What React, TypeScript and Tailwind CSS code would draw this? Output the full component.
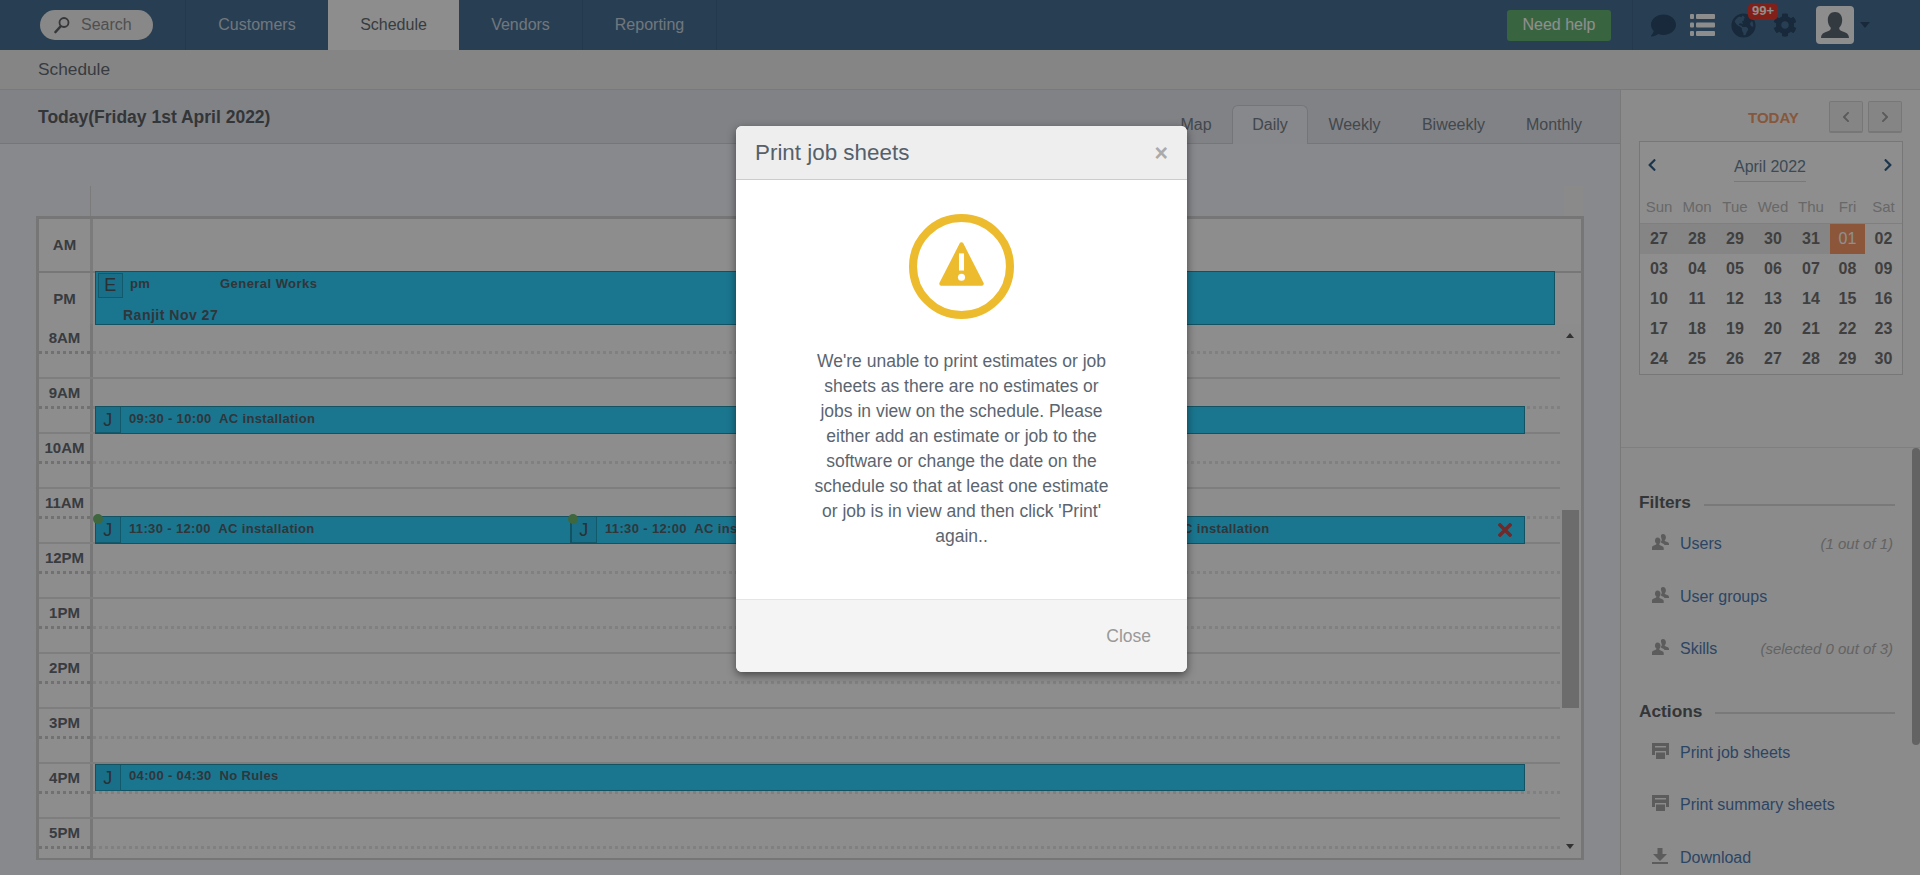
import React from 'react';
import { FaComment, FaGlobeAmericas, FaCog, FaChevronLeft, FaChevronRight } from 'react-icons/fa';

const hours = ['8AM', '9AM', '10AM', '11AM', '12PM', '1PM', '2PM', '3PM', '4PM', '5PM'];
const weekDays = ['Sun', 'Mon', 'Tue', 'Wed', 'Thu', 'Fri', 'Sat'];
const calendarDays = [
  '27', '28', '29', '30', '31', '01', '02',
  '03', '04', '05', '06', '07', '08', '09',
  '10', '11', '12', '13', '14', '15', '16',
  '17', '18', '19', '20', '21', '22', '23',
  '24', '25', '26', '27', '28', '29', '30',
];

const UsersIcon = () => (
  <svg viewBox="0 0 17 16" className="h-4 w-[17px] fill-[#a4a4a4]">
    <path d="M11 0c1.800 0 2.900 1.300 2.900 3.200 0 1.300-.5 2.300-1.200 3 0 .8.300 1 1.300 1.400 1.400.5 3 1 3 2.400v1h-4.500c-.5-1-1.600-1.500-2.700-2-.8-.3-1-.5-1-1 .5-.6.900-1.200 1-2-.1-.7-.2-1.500-.5-2C8.300 1.300 9.300 0 11 0z" />
    <path d="M5.500 3.500c1.900 0 3 1.400 3 3.300 0 1.300-.5 2.400-1.200 3.100 0 .8.300 1.100 1.400 1.500 1.500.5 3 1 3 2.500V16H0v-2.600c0-1.500 1.500-2 3-2.500 1.100-.4 1.400-.7 1.400-1.500C3.700 9.200 3 8.100 3 6.800c0-1.900.7-3.300 2.500-3.300z" />
  </svg>
);

const PrintIcon = () => (
  <svg viewBox="0 0 17 16" className="h-4 w-[17px] fill-[#a4a4a4]">
    <path d="M0 0h17v12h-3V8H3v4H0z" />
    <path d="M4 9.500h9V16H4z" />
    <rect x="3" y="3" width="11" height="1.500" className="fill-[#f8f8f8]" />
  </svg>
);

const DownloadIcon = () => (
  <svg viewBox="0 0 16 16" className="h-4 w-4 fill-[#a4a4a4]">
    <path d="M5.500 0h5v6H15l-7 7-7-7h4.500z" />
    <rect x="0" y="14" width="16" height="2" />
  </svg>
);

const ListIcon = () => (
  <svg viewBox="0 0 25 22" className="h-[22px] w-[25px] fill-[#fbfbfb]">
    <rect x="0" y="0" width="4" height="5" rx="1" />
    <rect x="6" y="0" width="19" height="5" rx="1" />
    <rect x="0" y="8.500" width="4" height="5" rx="1" />
    <rect x="6" y="8.500" width="19" height="5" rx="1" />
    <rect x="0" y="17" width="4" height="5" rx="1" />
    <rect x="6" y="17" width="19" height="5" rx="1" />
  </svg>
);

const SearchIcon = () => (
  <svg viewBox="0 0 16 18" className="h-[18px] w-4 fill-none stroke-[#5f6368]">
    <circle cx="10" cy="6.500" r="4.500" strokeWidth="1.800" />
    <path d="M6.500 10.500L1.500 16" strokeWidth="2.600" strokeLinecap="round" />
  </svg>
);

const AvatarIcon = () => (
  <svg viewBox="0 0 38 38" className="h-[38px] w-[38px] fill-[#5c6873]">
    <path d="M19 6c4.600 0 7.200 3.500 7.200 8 0 3.300-1.200 6-3 7.800 0 2 .7 2.700 3.600 3.700 3.600 1.300 5.900 2.200 6.200 6.500H5c.3-4.300 2.600-5.200 6.200-6.500 2.900-1 3.600-1.700 3.600-3.700-1.800-1.800-3-4.500-3-7.800 0-4.500 2.600-8 7.200-8z" />
  </svg>
);

const WarningIcon = () => (
  <svg viewBox="0 0 104 104" className="h-[105px] w-[105px]">
    <circle cx="52" cy="52" r="48" fill="none" stroke="#edbb2e" strokeWidth="8" />
    <polygon points="52,30 72,69 32,69" fill="#edbb2e" stroke="#edbb2e" strokeWidth="4" strokeLinejoin="round" />
    <rect x="49.500" y="39" width="5" height="17" fill="#fff" />
    <circle cx="52" cy="62.700" r="3.500" fill="#fff" />
  </svg>
);

const Dotted = ({ strong }: { strong?: boolean }) => (
  <div
    className={
      strong
        ? 'h-[3px] w-full bg-[repeating-linear-gradient(90deg,#cacaca_0_3px,transparent_3px_6px)]'
        : 'h-[3px] w-full bg-[repeating-linear-gradient(90deg,#e4e4e4_0_3px,transparent_3px_6px)]'
    }
  />
);

const HourRow = ({ label }: { label: string }) => (
  <div className="flex h-[55px] shrink-0 border-b-2 border-[#e0e0e0]">
    <div className="w-[51px] shrink-0">
      <div className="flex h-[27px] items-center justify-center pt-[1px] text-[15px] font-bold text-[#646b73]">{label}</div>
      <Dotted strong />
    </div>
    <div className="w-[3px] shrink-0 bg-[#d4d4d4]" />
    <div className="flex-1 pt-[27px]">
      <Dotted />
    </div>
  </div>
);

const JobBlock = ({ time, title, className }: { time: string; title: string; className: string }) => (
  <div className={`absolute flex border border-[#1f94b0] bg-[#2fd2ff] text-[13px] font-bold tracking-[0.35px] text-[#586068] ${className}`}>
    <div className="flex h-[26px] w-[25px] shrink-0 items-center justify-center border-r border-b border-[#20a0bf] bg-[#2cc6f0] text-[18px] font-normal text-[#4e565d]">J</div>
    <div className="whitespace-pre pl-[8px]">{time}  {title}</div>
  </div>
);

const SideRow = ({ icon, label, note }: { icon: React.ReactNode; label: string; note?: string }) => (
  <div className="flex h-[52.5px] shrink-0 items-center pl-[31px] pr-[27px]">
    <span className="-mt-[4px] w-[28px] shrink-0">{icon}</span>
    <span className="text-[#4f7cb4]">{label}</span>
    {note && <span className="ml-auto text-[15px] italic text-[#b0b0b0]">{note}</span>}
  </div>
);

const SideHeading = ({ label, className }: { label: string; className?: string }) => (
  <div className={`flex h-6 shrink-0 items-center gap-[13px] pl-[18px] pr-[25px] ${className || ''}`}>
    <span className="text-[17.3px] font-bold text-[#5c6166]">{label}</span>
    <span className="mt-[3px] h-[2px] flex-1 bg-[#d8d8d8]" />
  </div>
);

export default function App() {
  return (
    <div className="relative h-[875px] w-[1920px] overflow-hidden bg-[#f8f8f8] font-['Liberation_Sans',Arial,sans-serif] text-base text-[#606a72]">
      {/* Top nav */}
      <header className="flex h-[50px] items-center bg-[#487094] text-[#c9d5df]">
        <div className="flex h-full w-[186px] items-center border-r border-[#41668a] pl-[40px]">
          <div className="flex h-[30px] w-[113px] items-center gap-[11px] rounded-full bg-[#f2f2f2] pl-[14px] text-[#8e8e8e]">
            <SearchIcon />
            <span>Search</span>
          </div>
        </div>
        <nav className="flex h-full">
          <div className="flex w-[142px] items-center justify-center">Customers</div>
          <div className="flex w-[131px] items-center justify-center bg-[#fbfbfb] text-[#646b73]">Schedule</div>
          <div className="flex w-[124px] items-center justify-center border-r border-[#41668a]">Vendors</div>
          <div className="flex w-[134px] items-center justify-center border-r border-[#41668a]">Reporting</div>
        </nav>
        <div className="ml-auto flex h-full items-center">
          <button className="h-[31px] w-[104px] rounded-[3px] bg-[#66b373] text-white">Need help</button>
          <div className="ml-[21px] h-full w-px bg-[#41668a]" />
          <FaComment className="ml-[18px] h-[25px] w-[25px] text-[#2a4a6a]" />
          <div className="ml-[14px]"><ListIcon /></div>
          <div className="relative ml-[16px]">
            <FaGlobeAmericas className="h-[25px] w-[25px] text-[#2a4a6a]" />
            <span className="absolute -top-[10px] left-[17px] flex h-[17px] w-[30px] items-center justify-center rounded-[5px] bg-[#e6392b] text-[13px] font-bold text-white">99+</span>
          </div>
          <FaCog className="ml-[17px] h-[24px] w-[24px] text-[#2a4a6a]" />
          <div className="ml-[19px] h-[38px] w-[38px] rounded-[4px] bg-[#fbfbfb]"><AvatarIcon /></div>
          <span className="ml-[6px] mr-[50px] h-0 w-0 border-x-[5px] border-t-[6px] border-x-transparent border-t-[#2a4a6a]" />
        </div>
      </header>

      {/* Breadcrumb */}
      <div className="flex h-[40px] items-center border-b border-[#d8d8d8] bg-[#eeeeee] pl-[38px] text-[17.3px] text-[#646b73]">Schedule</div>

      <div className="flex h-[785px]">
        {/* Schedule */}
        <main className="w-[1620px] shrink-0 bg-[#f3f5fc]">
          <div className="flex h-[54px] items-end justify-between border-b border-[#d0d2d8] bg-[#e6e8ef]">
            <h1 className="self-center pl-[38px] pt-[2px] text-[17.5px] font-bold text-[#5c6166]">Today(Friday 1st April 2022)</h1>
            <div className="-mb-px flex h-[39px] pr-[18px] text-[#768089]">
              <div className="flex w-[72px] items-center justify-center">Map</div>
              <div className="flex w-[76px] items-center justify-center rounded-t-[6px] border border-b-0 border-[#cfd1d8] bg-[#f0f2f8]">Daily</div>
              <div className="flex w-[93px] items-center justify-center">Weekly</div>
              <div className="flex w-[105px] items-center justify-center">Biweekly</div>
              <div className="flex w-[96px] items-center justify-center">Monthly</div>
            </div>
          </div>

          <div className="ml-[36px] w-[1548px] pt-[42px]">
            <div className="flex h-[30px]">
              <div className="ml-[54px] w-px bg-[#dcdcdc]" />
              <div className="ml-auto mr-px w-[19px] bg-[#f6f6f6]" />
            </div>
            <div className="relative h-[644px] overflow-hidden border-[3px] border-b-2 border-[#d2d2d2] bg-[#fcfcfc]">
              {/* All-day rows */}
              <div className="flex h-[54px] border-b-[2px] border-[#d4d4d4]">
                <div className="flex w-[51px] items-center justify-center pt-[1px] text-[15px] font-bold text-[#646b73]">AM</div>
                <div className="w-[3px] bg-[#dcdcdc]" />
              </div>
              <div className="flex h-[51px]">
                <div className="flex w-[51px] items-center justify-center pt-[1px] text-[15px] font-bold text-[#646b73]">PM</div>
                <div className="w-[3px] bg-[#dcdcdc]" />
              </div>
              {hours.map((h) => (
                <HourRow key={h} label={h} />
              ))}

              {/* Estimate */}
              <div className="absolute left-[56px] top-[52px] h-[54px] w-[1460px] border border-[#1f94b0] bg-[#2fd2ff] text-[13px] font-bold tracking-[0.3px] text-[#586068]">
                <div className="absolute left-[2px] top-[1px] flex h-[25px] w-[25px] items-center justify-center border border-[#20a0bf] bg-[#2cc6f0] text-[18px] font-normal text-[#4e565d]">E</div>
                <span className="absolute left-[34px] top-[2px]">pm</span>
                <span className="absolute left-[124px] top-[2px] tracking-[0.45px]">General Works</span>
                <span className="absolute left-[27px] top-[33px] text-[14px] tracking-[0.5px]">Ranjit Nov 27</span>
              </div>

              <JobBlock time="09:30 - 10:00" title="AC installation" className="left-[56px] top-[187px] h-[28px] w-[1430px] leading-[24px]" />
              <JobBlock time="11:30 - 12:00" title="AC installation" className="left-[56px] top-[297px] h-[28px] w-[476px] leading-[24px]" />
              <JobBlock time="11:30 - 12:00" title="AC installation" className="left-[532px] top-[297px] h-[28px] w-[476px] leading-[24px]" />
              <JobBlock time="11:30 - 12:00" title="AC installation" className="left-[1011px] top-[297px] h-[28px] w-[475px] leading-[24px]" />
              <JobBlock time="04:00 - 04:30" title="No Rules" className="left-[56px] top-[545px] h-[27px] w-[1430px] leading-[22px]" />

              {/* Status dots and remove mark */}
              <span className="absolute left-[54px] top-[295px] h-[10px] w-[10px] rounded-full bg-[#6fb86f]" />
              <span className="absolute left-[529px] top-[295px] h-[10px] w-[10px] rounded-full bg-[#6fb86f]" />
              <svg viewBox="0 0 14 14" className="absolute left-[1459px] top-[304px] h-[14px] w-[14px] stroke-[#c94a4a]" strokeWidth="3.500" strokeLinecap="square">
                <path d="M2 2l10 10M12 2L2 12" />
              </svg>

              {/* Scrollbar */}
              <div className="absolute right-0 top-[105px] bottom-0 w-[21px] bg-[#f9f9f9]">
                <span className="absolute left-[6px] top-[9px] h-0 w-0 border-x-[4.500px] border-b-[5px] border-x-transparent border-b-[#5a5a5a]" />
                <div className="absolute left-[2px] top-[186px] h-[198px] w-[17px] bg-[#c0c0c0]" />
                <span className="absolute bottom-[9px] left-[6px] h-0 w-0 border-x-[4.500px] border-t-[5px] border-x-transparent border-t-[#5a5a5a]" />
              </div>
            </div>
          </div>
        </main>

        {/* Sidebar */}
        <aside className="relative flex w-[300px] shrink-0 flex-col border-l border-[#d8d8d8] bg-[#f8f8f8]">
          <div className="flex h-[51px] shrink-0 items-center pt-[3px]">
            <span className="ml-[127px] mt-[2px] text-[15px] font-bold text-[#f09c6a]">TODAY</span>
            <button className="ml-[30px] flex h-[32px] w-[34px] items-center justify-center rounded-[2px] border border-b-2 border-[#d4d4d4] bg-[#eeeeee] text-[#a0a0a0]"><FaChevronLeft className="h-3 w-3" /></button>
            <button className="ml-[5px] flex h-[32px] w-[34px] items-center justify-center rounded-[2px] border border-b-2 border-[#d4d4d4] bg-[#eeeeee] text-[#a0a0a0]"><FaChevronRight className="h-3 w-3" /></button>
          </div>

          <div className="ml-[18px] h-[234px] w-[264px] shrink-0 border border-[#d5d5d5] bg-[#fefefe]">
            <div className="flex h-[49px] items-start justify-between pl-[5px] pr-[7px] pt-[13px] text-[#2f5f88]">
              <FaChevronLeft className="mt-[3px] h-[14px] w-[14px]" />
              <span className="border-b border-[#d8d8d8] pb-[2px] text-[#6a8599]">April 2022</span>
              <FaChevronRight className="mt-[3px] h-[14px] w-[14px]" />
            </div>
            <div className="grid h-[33px] grid-cols-[38px_38px_38px_38px_38px_35px_1fr] border-b border-[#e2e2e2] text-[15px] text-[#b9b9b9]">
              {weekDays.map((d) => (
                <div key={d} className="flex items-center justify-center">{d}</div>
              ))}
            </div>
            <div className="grid grid-cols-[38px_38px_38px_38px_38px_35px_1fr] font-bold text-[#717171]">
              {calendarDays.map((d, i) => (
                <div
                  key={i}
                  className={`flex h-[30px] items-center justify-center ${
                    i === 5 ? 'bg-[#fa9969] font-normal text-white' : i < 5 ? 'bg-[#eeeeee]' : ''
                  }`}
                >
                  {d}
                </div>
              ))}
            </div>
          </div>

          <div className="relative mt-[72px] flex min-h-0 flex-1 flex-col overflow-hidden border-t border-[#e2e2e2] pt-[43px]">
            <div className="absolute right-0 top-0 h-[297px] w-[8px] rounded-[4px] bg-[#b0b0b0]" />
            <SideHeading label="Filters" />
            <div className="mt-[3px]" />
            <SideRow icon={<UsersIcon />} label="Users" note="(1 out of 1)" />
            <SideRow icon={<UsersIcon />} label="User groups" />
            <SideRow icon={<UsersIcon />} label="Skills" note="(selected 0 out of 3)" />
            <SideHeading label="Actions" className="mt-[24px]" />
            <div className="mt-[3px]" />
            <SideRow icon={<PrintIcon />} label="Print job sheets" />
            <SideRow icon={<PrintIcon />} label="Print summary sheets" />
            <SideRow icon={<DownloadIcon />} label="Download" />
          </div>
        </aside>
      </div>

      {/* Modal backdrop */}
      <div className="absolute inset-0 bg-black/[0.44]" />

      {/* Modal */}
      <div className="absolute left-[736px] top-[126px] flex h-[546px] w-[451px] flex-col overflow-hidden rounded-[6px] bg-white shadow-[0_3px_9px_rgba(0,0,0,0.5)]">
        <div className="flex h-[54px] shrink-0 items-center justify-between border-b border-[#cccccc] bg-[#eeeeee] pl-[19px] pr-[19px]">
          <span className="text-[22.4px] text-[#55606b]">Print job sheets</span>
          <span className="pt-[1px] text-[23px] font-bold text-[#aaaaaa]">×</span>
        </div>
        <div className="flex flex-1 flex-col items-center pt-[34px]">
          <WarningIcon />
          <p className="mt-[30px] w-[300px] text-center text-[17.5px] leading-[25px] text-[#5b6570]">
            We're unable to print estimates or job sheets as there are no estimates or jobs in view on the schedule. Please either add an estimate or job to the software or change the date on the schedule so that at least one estimate or job is in view and then click 'Print' again..
          </p>
        </div>
        <div className="flex h-[73px] shrink-0 items-center justify-end border-t border-[#e5e5e5] bg-[#f4f4f4] pr-[36px] text-[17.5px] text-[#999999]">Close</div>
      </div>
    </div>
  );
}
